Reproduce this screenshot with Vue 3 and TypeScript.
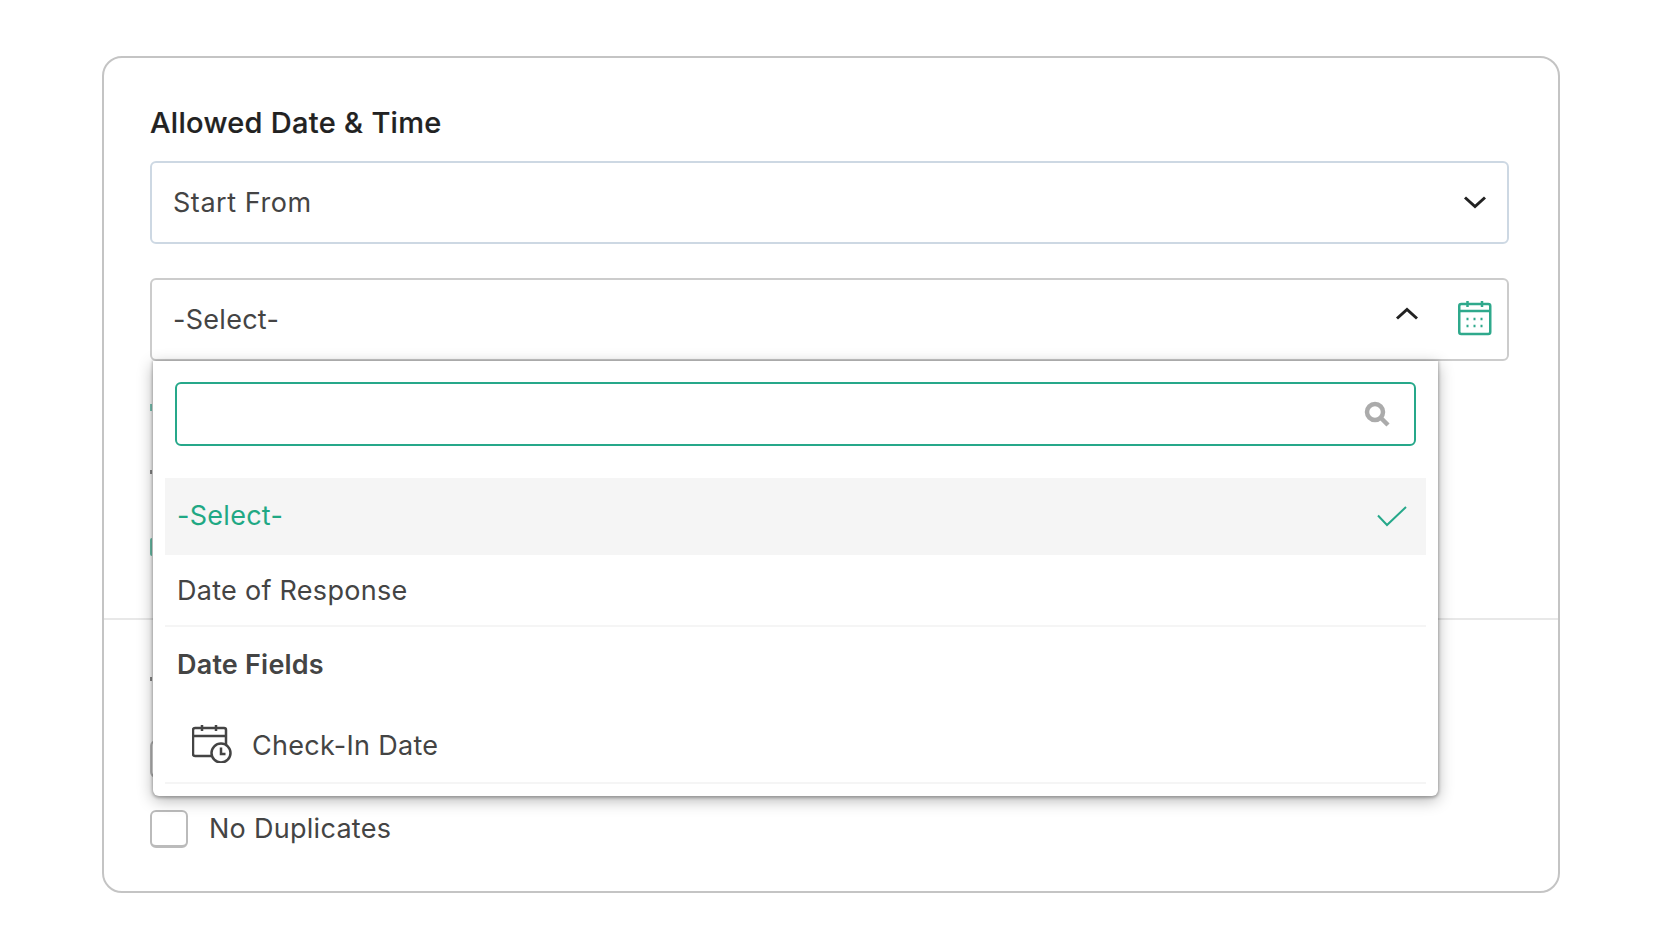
<script setup lang="ts">
const search = ''
</script>

<template>
  <div class="page">
    <div class="card">
      <section class="top">
        <h3 class="title">Allowed Date &amp; Time</h3>
        <div class="select first">
          <span>Start From</span>
          <svg class="chev" viewBox="0 0 24 14" width="24" height="14" fill="none"><path d="M2 2.5 12 11.5 22 2.5" /></svg>
        </div>
        <div class="field-wrap">
          <div class="select open">
            <span>-Select-</span>
            <svg class="chev up" viewBox="0 0 24 14" width="24" height="14" fill="none"><path d="M2 11.5 12 2.5 22 11.5" /></svg>
            <svg class="cal" viewBox="0 0 34 36" width="34" height="36" fill="none">
              <rect x="1.250" y="4" width="31" height="30" rx="2" />
              <path d="M1 11h31M9.500 1v6M24 1v6" />
              <path class="dots" d="M8.500 19h2M15.500 19h2M22.500 19h2M8.500 26h2M15.500 26h2M22.500 26h2" />
            </svg>
          </div>

          <div class="dropdown">
            <div class="search">
              <input :value="search" type="text" />
              <svg class="lens" viewBox="0 0 26 26" width="26" height="26" fill="none">
                <circle cx="11" cy="11" r="8" />
                <path d="M17 17l7 7" />
              </svg>
            </div>
            <ul class="opts">
              <li class="opt active">
                <span>-Select-</span>
                <svg viewBox="0 0 30 22" width="30" height="22" fill="none"><path d="M1 10.500 10 20 29 2" /></svg>
              </li>
              <li class="opt plain">Date of Response</li>
              <li class="group">Date Fields</li>
              <li class="opt field">
                <svg viewBox="0 0 40 38" width="40" height="38" fill="none">
                  <path d="M20 31H3a2 2 0 0 1-2-2V5a2 2 0 0 1 2-2h29a2 2 0 0 1 2 2v15" />
                  <path d="M1 11h33M10 0v6M24 0v6" />
                  <circle cx="29" cy="28" r="9.500" />
                  <path d="M29 22.500V29h4.500" />
                </svg>
                <span>Check-In Date</span>
              </li>
            </ul>
          </div>
        </div>
        <div class="peek-rows">
          <i class="mark teal-dots"></i>
          <i class="mark dark-dot"></i>
          <i class="mark radio"></i>
        </div>
      </section>

      <section class="bottom">
        <i class="mark dark-dot low"></i>
        <div class="check hidden-check"></div>
        <label class="check-row">
          <span class="check"></span>
          <span>No Duplicates</span>
        </label>
      </section>
    </div>
  </div>
</template>

<style>
html,
body {
  margin: 0;
  background: #fff;
}
</style>

<style scoped>
.page {
  box-sizing: border-box;
  width: 1658px;
  height: 946px;
  padding: 56px 98px 53px 102px;
  font-family: Inter, "Liberation Sans", sans-serif;
  letter-spacing: 0.28px;
}

.card {
  box-sizing: border-box;
  height: 837px;
  border: 2px solid #c4c4c4;
  border-radius: 20px;
  background: #fff;
  display: flex;
  flex-direction: column;
}

.top {
  box-sizing: border-box;
  height: 562px;
  padding: 47px 49px 0 46px;
  border-bottom: 2px solid #e8e8e8;
}

.title {
  margin: 0 0 20px;
  font-size: 29px;
  line-height: 36px;
  font-weight: 500;
  letter-spacing: 0.3px;
  color: #222;
  -webkit-text-stroke: 0.2px #222;
}

.select {
  box-sizing: border-box;
  height: 83px;
  border: 2px solid #cdd8e3;
  border-radius: 6px;
  padding: 0 20px 0 21px;
  display: flex;
  align-items: center;
  font-size: 27px;
  color: #444;
}

.select > span {
  flex: 1;
}

.select.first > span {
  letter-spacing: 0.55px;
}

.chev {
  margin-top: -1px;
}

.chev path {
  stroke: #222;
  stroke-width: 3;
}

.field-wrap {
  position: relative;
  margin-top: 34px;
}

.select.open {
  border-color: #ccc;
  height: 83px;
  padding-right: 15px;
}

.chev.up {
  margin: -12px 39px 0 0;
}

.cal {
  margin-top: -3px;
  stroke: #2fa98c;
  stroke-width: 2.500;
}

.cal .dots {
  stroke-width: 2.500;
}

.dropdown {
  position: absolute;
  z-index: 2;
  top: 83px;
  left: 3px;
  width: 1285px;
  height: 435px;
  box-sizing: border-box;
  padding: 21px 12px 0;
  background: #fff;
  border-radius: 0 0 6px 6px;
  box-shadow: 0 1px 3px 1px rgba(0, 0, 0, 0.26), 0 4px 16px rgba(0, 0, 0, 0.3);
}

.search {
  position: relative;
  margin: 0 10px;
}

.search input {
  display: block;
  box-sizing: border-box;
  width: 100%;
  height: 64px;
  border: 2px solid #26a88a;
  border-radius: 6px;
  outline: none;
  background: #fff;
}

.lens {
  position: absolute;
  right: 26px;
  top: 19px;
  filter: blur(0.5px);
}

.lens circle,
.lens path {
  stroke: #ababab;
  stroke-width: 4.500;
}

.opts {
  list-style: none;
  margin: 32px 0 0;
  padding: 0;
  font-size: 27px;
  color: #444;
}

.opt {
  display: flex;
  align-items: center;
  box-sizing: border-box;
  padding: 0 19px 0 12px;
}

.opt.active {
  justify-content: space-between;
  height: 77px;
  padding-bottom: 2px;
  background: #f5f5f5;
  color: #1fa884;
}

.active svg path {
  stroke: #26a88a;
  stroke-width: 2;
}

.opt.plain {
  height: 72px;
  border-bottom: 2px solid #f5f5f5;
}

.group {
  height: 72px;
  line-height: 76px;
  padding-left: 12px;
  font-weight: 600;
  letter-spacing: 0.2px;
}

.opt.field {
  height: 85px;
  padding-top: 10px;
  padding-left: 27px;
  gap: 20px;
  border-bottom: 2px solid #f5f5f5;
}

.field svg {
  margin-top: -3px;
  stroke: #444;
  stroke-width: 2.500;
}

.peek-rows {
  position: relative;
}

.mark {
  position: absolute;
  display: block;
  left: 0;
}

.teal-dots {
  top: 43px;
  width: 2px;
  height: 7px;
  background: #7cc7b6;
}

.dark-dot {
  top: 109px;
  width: 2px;
  height: 4px;
  background: #888;
}

.radio {
  top: 177px;
  width: 2px;
  height: 18px;
  background: #6bbfa9;
  border-radius: 2px 0 0 2px;
}

.bottom {
  position: relative;
  flex: 1;
  padding: 0 46px;
}

.dark-dot.low {
  left: 46px;
  top: 57px;
}

.check {
  display: block;
  box-sizing: border-box;
  flex: none;
  width: 38px;
  height: 38px;
  border: 2px solid #bbb;
  border-bottom-width: 3px;
  border-radius: 6px;
  background: #fff;
}

.hidden-check {
  margin-top: 120px;
}

.check-row {
  display: flex;
  align-items: center;
  gap: 21px;
  margin-top: 32px;
  font-size: 27px;
  color: #444;
}

.check-row > span:last-child {
  margin-top: -2px;
}
</style>
